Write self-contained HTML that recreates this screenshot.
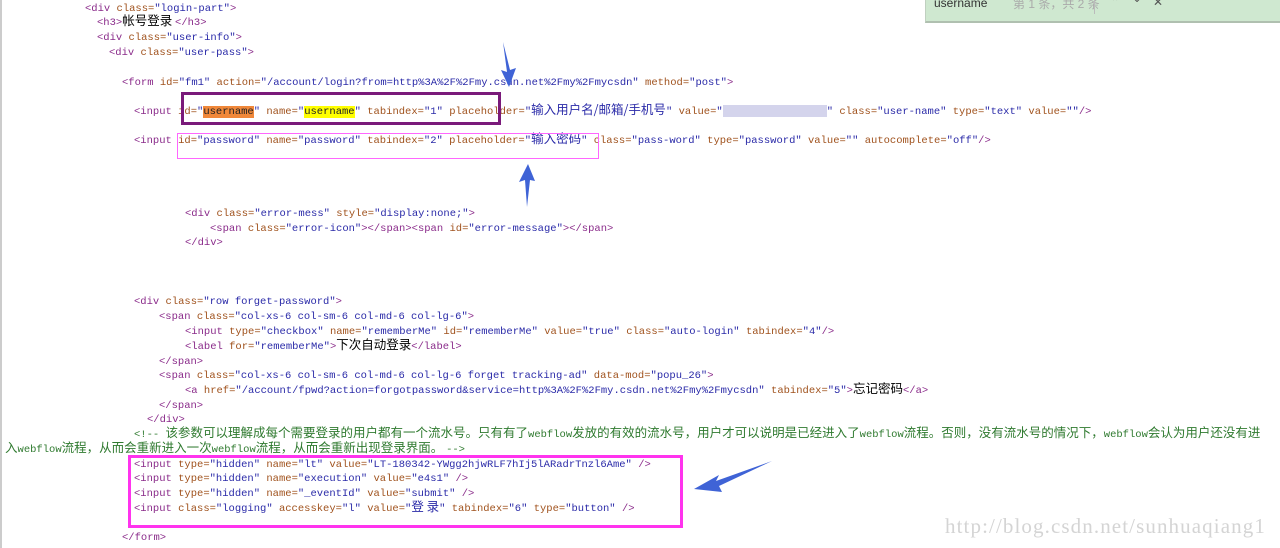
<!DOCTYPE html>
<html><head><meta charset="utf-8"><style>
body{margin:0;width:1280px;height:548px;background:#fff;position:relative;overflow:hidden;font-family:"Liberation Mono","Noto Sans CJK SC",monospace;font-size:10.5px;}
.l{position:absolute;white-space:pre;line-height:14px;height:14px}
.k{font-family:"Noto Sans CJK SC",sans-serif;font-size:12.5px;line-height:0}
.t{color:#8a2b8a}.a{color:#a0521d}.v{color:#2a2aa8}.x{color:#000}.c{color:#2f7a2f}
.box{position:absolute;box-sizing:border-box}
</style></head><body>
<div class="box" style="left:0;top:0;width:2px;height:548px;background:#ccc"></div>
<div class="l" style="left:85px;top:2px"><span class="t">&lt;div </span><span class="a">class=</span><span class="v">"login-part"</span><span class="t">&gt;</span></div>
<div class="l" style="left:97px;top:16px"><span class="t">&lt;h3&gt;</span><span class="x k">帐号登录 </span><span class="t">&lt;/h3&gt;</span></div>
<div class="l" style="left:97px;top:31px"><span class="t">&lt;div </span><span class="a">class=</span><span class="v">"user-info"</span><span class="t">&gt;</span></div>
<div class="l" style="left:109px;top:46px"><span class="t">&lt;div </span><span class="a">class=</span><span class="v">"user-pass"</span><span class="t">&gt;</span></div>
<div class="l" style="left:122px;top:76px"><span class="t">&lt;form </span><span class="a">id=</span><span class="v">"fm1"</span> <span class="a">action=</span><span class="v">"/account/login?from=http%3A%2F%2Fmy.csdn.net%2Fmy%2Fmycsdn"</span> <span class="a">method=</span><span class="v">"post"</span><span class="t">&gt;</span></div>
<div class="l" style="left:134px;top:105px"><span class="t">&lt;input </span><span class="a">id=</span><span class="v">"<span style="background:#f0883a;color:#222">username</span>"</span> <span class="a">name=</span><span class="v">"<span style="background:#ffff00;color:#222">username</span>"</span> <span class="a">tabindex=</span><span class="v">"1"</span> <span class="a">placeholder=</span><span class="v">"<span class="k">输入用户名/邮箱/手机号</span>"</span> <span class="a">value=</span><span class="v">"<span style="display:inline-block;width:104px;height:12px;background:#d4d4ec;vertical-align:middle"></span>"</span> <span class="a">class=</span><span class="v">"user-name"</span> <span class="a">type=</span><span class="v">"text"</span> <span class="a">value=</span><span class="v">""</span><span class="t">/&gt;</span></div>
<div class="l" style="left:134px;top:134px"><span class="t">&lt;input </span><span class="a">id=</span><span class="v">"password"</span> <span class="a">name=</span><span class="v">"password"</span> <span class="a">tabindex=</span><span class="v">"2"</span> <span class="a">placeholder=</span><span class="v">"<span class="k">输入密码</span>"</span> <span class="a">class=</span><span class="v">"pass-word"</span> <span class="a">type=</span><span class="v">"password"</span> <span class="a">value=</span><span class="v">""</span> <span class="a">autocomplete=</span><span class="v">"off"</span><span class="t">/&gt;</span></div>
<div class="l" style="left:185px;top:207px"><span class="t">&lt;div </span><span class="a">class=</span><span class="v">"error-mess"</span> <span class="a">style=</span><span class="v">"display:none;"</span><span class="t">&gt;</span></div>
<div class="l" style="left:210px;top:222px"><span class="t">&lt;span </span><span class="a">class=</span><span class="v">"error-icon"</span><span class="t">&gt;&lt;/span&gt;&lt;span </span><span class="a">id=</span><span class="v">"error-message"</span><span class="t">&gt;&lt;/span&gt;</span></div>
<div class="l" style="left:185px;top:236px"><span class="t">&lt;/div&gt;</span></div>
<div class="l" style="left:134px;top:295px"><span class="t">&lt;div </span><span class="a">class=</span><span class="v">"row forget-password"</span><span class="t">&gt;</span></div>
<div class="l" style="left:159px;top:310px"><span class="t">&lt;span </span><span class="a">class=</span><span class="v">"col-xs-6 col-sm-6 col-md-6 col-lg-6"</span><span class="t">&gt;</span></div>
<div class="l" style="left:185px;top:325px"><span class="t">&lt;input </span><span class="a">type=</span><span class="v">"checkbox"</span> <span class="a">name=</span><span class="v">"rememberMe"</span> <span class="a">id=</span><span class="v">"rememberMe"</span> <span class="a">value=</span><span class="v">"true"</span> <span class="a">class=</span><span class="v">"auto-login"</span> <span class="a">tabindex=</span><span class="v">"4"</span><span class="t">/&gt;</span></div>
<div class="l" style="left:185px;top:340px"><span class="t">&lt;label </span><span class="a">for=</span><span class="v">"rememberMe"</span><span class="t">&gt;</span><span class="x k">下次自动登录</span><span class="t">&lt;/label&gt;</span></div>
<div class="l" style="left:159px;top:355px"><span class="t">&lt;/span&gt;</span></div>
<div class="l" style="left:159px;top:369px"><span class="t">&lt;span </span><span class="a">class=</span><span class="v">"col-xs-6 col-sm-6 col-md-6 col-lg-6 forget tracking-ad"</span> <span class="a">data-mod=</span><span class="v">"popu_26"</span><span class="t">&gt;</span></div>
<div class="l" style="left:185px;top:384px"><span class="t">&lt;a </span><span class="a">href=</span><span class="v">"/account/fpwd?action=forgotpassword&amp;service=http%3A%2F%2Fmy.csdn.net%2Fmy%2Fmycsdn"</span> <span class="a">tabindex=</span><span class="v">"5"</span><span class="t">&gt;</span><span class="x k">忘记密码</span><span class="t">&lt;/a&gt;</span></div>
<div class="l" style="left:159px;top:399px"><span class="t">&lt;/span&gt;</span></div>
<div class="l" style="left:147px;top:413px"><span class="t">&lt;/div&gt;</span></div>
<div class="l c" style="left:134px;top:428px">&lt;!-- <span class="k">该参数可以理解成每个需要登录的用户都有一个流水号。只有有了</span>webflow<span class="k">发放的有效的流水号，用户才可以说明是已经进入了</span>webflow<span class="k">流程。否则，没有流水号的情况下，</span>webflow<span class="k">会认为用户还没有进</span></div>
<div class="l c" style="left:5px;top:443px"><span class="k">入</span>webflow<span class="k">流程，从而会重新进入一次</span>webflow<span class="k">流程，从而会重新出现登录界面。 </span>--&gt;</div>
<div class="l" style="left:134px;top:458px"><span class="t">&lt;input </span><span class="a">type=</span><span class="v">"hidden"</span> <span class="a">name=</span><span class="v">"lt"</span> <span class="a">value=</span><span class="v">"LT-180342-YWgg2hjwRLF7hIj5lARadrTnzl6Ame"</span> <span class="t">/&gt;</span></div>
<div class="l" style="left:134px;top:472px"><span class="t">&lt;input </span><span class="a">type=</span><span class="v">"hidden"</span> <span class="a">name=</span><span class="v">"execution"</span> <span class="a">value=</span><span class="v">"e4s1"</span> <span class="t">/&gt;</span></div>
<div class="l" style="left:134px;top:487px"><span class="t">&lt;input </span><span class="a">type=</span><span class="v">"hidden"</span> <span class="a">name=</span><span class="v">"_eventId"</span> <span class="a">value=</span><span class="v">"submit"</span> <span class="t">/&gt;</span></div>
<div class="l" style="left:134px;top:502px"><span class="t">&lt;input </span><span class="a">class=</span><span class="v">"logging"</span> <span class="a">accesskey=</span><span class="v">"l"</span> <span class="a">value=</span><span class="v">"<span class="k">登 录</span>"</span> <span class="a">tabindex=</span><span class="v">"6"</span> <span class="a">type=</span><span class="v">"button"</span> <span class="t">/&gt;</span></div>
<div class="l" style="left:122px;top:531px"><span class="t">&lt;/form&gt;</span></div>

<div class="box" style="left:181px;top:92px;width:320px;height:33px;border:3px solid #7a1a7a"></div>
<div class="box" style="left:177px;top:133px;width:422px;height:26px;border:1px solid #ff66ff"></div>
<div class="box" style="left:128px;top:455px;width:555px;height:73px;border:3px solid #ff33ee"></div>

<div class="box" style="left:925px;top:0;width:355px;height:23px;background:#cfe8d0;border-bottom:2px solid #b0c0b0;border-left:1px solid #c0d0c0;font-family:'Liberation Sans','Noto Sans CJK SC',sans-serif;font-size:12px">
<span style="position:absolute;left:8px;top:-4px;color:#333">username</span>
<span style="position:absolute;left:87px;top:-5px;color:#aaa">第 1 条，共 2 条</span>
<span style="position:absolute;left:168px;top:0;width:1px;height:14px;background:#bbb"></span>
<span style="position:absolute;left:184px;top:-5px;color:#555">⌃</span>
<span style="position:absolute;left:206px;top:-9px;color:#555">⌄</span>
<span style="position:absolute;left:227px;top:-5px;color:#555">✕</span>
</div>

<svg class="box" style="left:0;top:0" width="1280" height="548">
<path d="M503 42 L507 72 L501 70 L509 87 L516 68 L510 70 Z" fill="#3f63d6"/>
<path d="M527 207 L525 180 L519 182 L528 164 L535 181 L530 180 Z" fill="#3f63d6"/>
<path d="M772 461 L716 481 L719 475 L694 489 L722 492 L719 486 Z" fill="#3f63d6"/>
</svg>
<div class="l" style="left:945px;top:514px;height:24px;font-family:'Liberation Serif',serif;font-size:21px;color:#d4d4d4;letter-spacing:1.1px;line-height:24px">http://blog.csdn.net/sunhuaqiang1</div>
</body></html>
